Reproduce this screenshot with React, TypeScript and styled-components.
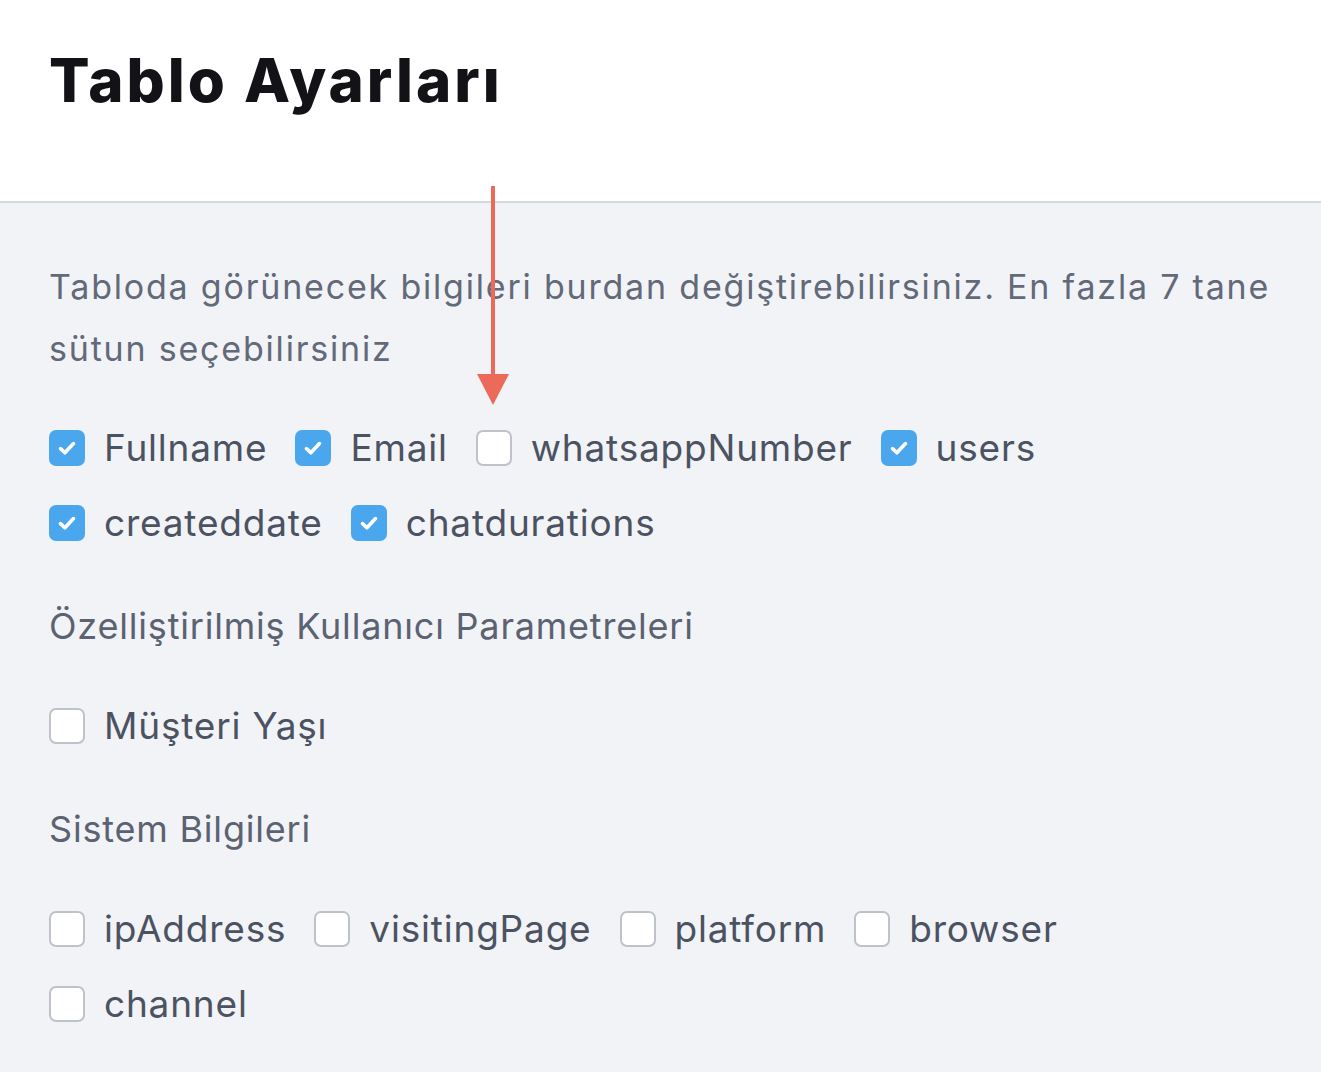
import React from 'react';
import styled, { createGlobalStyle } from 'styled-components';

const GlobalStyle = createGlobalStyle`
  body {
    margin: 0;
    background: #f2f3f7;
    font-family: Inter, "Noto Sans", sans-serif;
  }
`;

interface Option {
  name: string;
  checked: boolean;
}

const mainColumns: Option[] = [
  { name: 'Fullname', checked: true },
  { name: 'Email', checked: true },
  { name: 'whatsappNumber', checked: false },
  { name: 'users', checked: true },
  { name: 'createddate', checked: true },
  { name: 'chatdurations', checked: true },
];

const customParams: Option[] = [{ name: 'Müşteri Yaşı', checked: false }];

const systemInfo: Option[] = [
  { name: 'ipAddress', checked: false },
  { name: 'visitingPage', checked: false },
  { name: 'platform', checked: false },
  { name: 'browser', checked: false },
  { name: 'channel', checked: false },
];

const CheckList = ({ items }: { items: Option[] }) => (
  <List>
    {items.map((item) => (
      <Item key={item.name}>
        <Box checked={item.checked}>
          {item.checked && (
            <svg width="36" height="36" viewBox="0 0 36 36">
              <path d="M11.5 18.6l4.4 4.2 8.6-9.2" fill="none" stroke="#fff" strokeWidth="3.6" strokeLinecap="round" strokeLinejoin="round" />
            </svg>
          )}
        </Box>
        <Label>{item.name}</Label>
      </Item>
    ))}
  </List>
);

const App = () => {
  return (
    <Page>
      <GlobalStyle />
      <Header>
        <Title>Tablo Ayarları</Title>
      </Header>
      <Content>
        <Intro>
          Tabloda görünecek bilgileri burdan değiştirebilirsiniz. En fazla 7 tane sütun seçebilirsiniz
        </Intro>
        <CheckList items={mainColumns} />
        <SectionTitle>Özelliştirilmiş Kullanıcı Parametreleri</SectionTitle>
        <CheckList items={customParams} />
        <SectionTitle>Sistem Bilgileri</SectionTitle>
        <CheckList items={systemInfo} />
      </Content>
      <Arrow width="40" height="222" viewBox="0 0 40 222">
        <line x1="20" y1="0" x2="20" y2="192" stroke="#ec6a5a" strokeWidth="4" />
        <polygon points="4,188 36,188 20,219" fill="#ec6a5a" />
      </Arrow>
    </Page>
  );
};

const Page = styled.div`
  position: relative;
  min-height: 1072px;
  background: #f2f3f7;
`;

const Header = styled.header`
  height: 203px;
  background: #ffffff;
  border-bottom: 2px solid #d5d9df;
  padding: 50px 49px 0;
  box-sizing: border-box;
`;

const Title = styled.h1`
  margin: 0;
  font-size: 60px;
  line-height: 60px;
  font-weight: 800;
  color: #121217;
  letter-spacing: 3px;
`;

const Content = styled.main`
  padding: 53px 49px 40px;
`;

const Intro = styled.p`
  margin: 0 0 50px;
  font-size: 34px;
  line-height: 62px;
  letter-spacing: 1.8px;
  color: #626979;
`;

const List = styled.div`
  display: flex;
  flex-wrap: wrap;
  column-gap: 28px;
  row-gap: 39px;
  max-width: 1180px;
`;

const Item = styled.label`
  display: flex;
  align-items: center;
  gap: 19px;
  height: 36px;
`;

const Box = styled.span<{ checked: boolean }>`
  width: 36px;
  height: 36px;
  box-sizing: border-box;
  border-radius: 7px;
  display: flex;
  align-items: center;
  justify-content: center;
  flex-shrink: 0;
  background: ${(props) => (props.checked ? '#4aa7ee' : '#ffffff')};
  border: ${(props) => (props.checked ? 'none' : '2px solid #bec3ca')};
`;

const Label = styled.span`
  font-size: 37px;
  line-height: 36px;
  letter-spacing: 0.8px;
  color: #4b5261;
`;

const SectionTitle = styled.h2`
  margin: 65px 0 62px;
  font-size: 36px;
  line-height: 40px;
  letter-spacing: 0.8px;
  font-weight: 400;
  color: #5b6271;
`;

const Arrow = styled.svg`
  position: absolute;
  left: 473px;
  top: 186px;
`;

export default App;
